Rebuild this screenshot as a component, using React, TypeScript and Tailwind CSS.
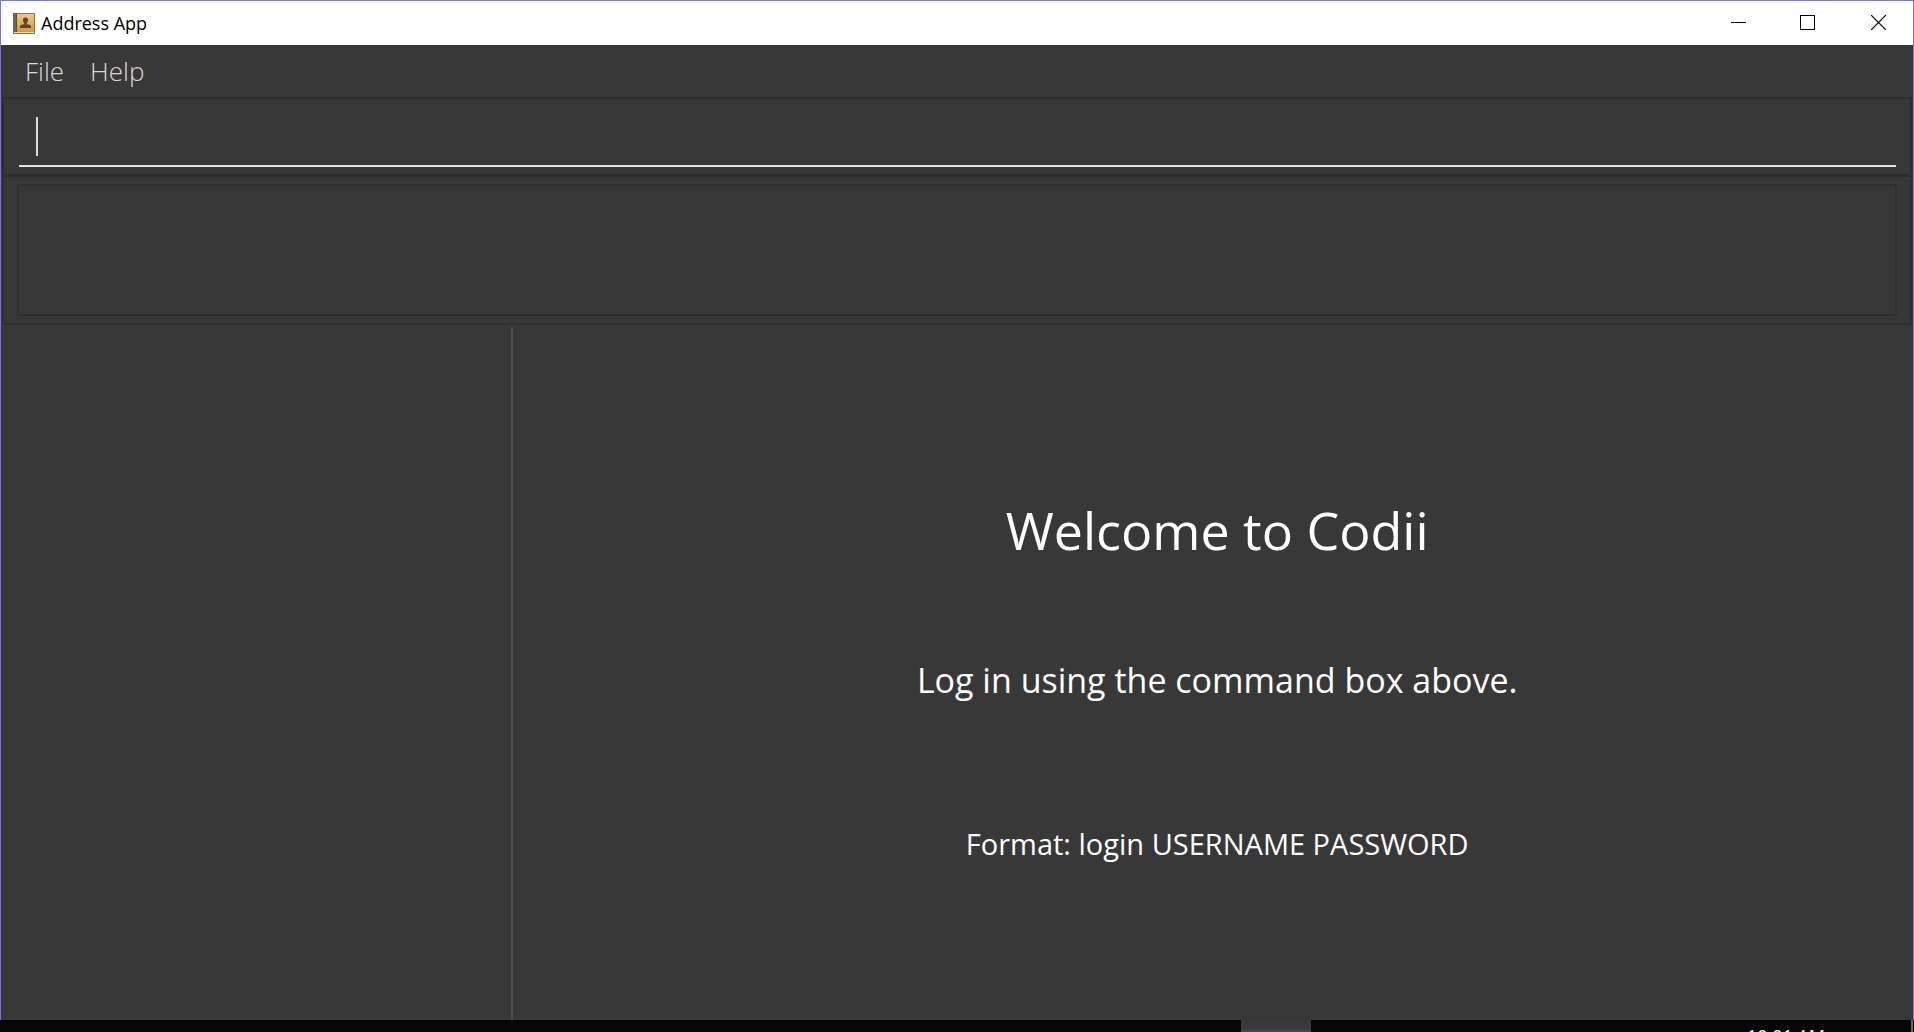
import React from 'react';

function AddressBookIcon() {
  return (
    <svg width="22" height="21" viewBox="0 0 22 21" aria-hidden="true">
      <defs>
        <linearGradient id="cover" x1="0" y1="0" x2="0" y2="1">
          <stop offset="0" stopColor="#eac98b" />
          <stop offset="1" stopColor="#cf9a41" />
        </linearGradient>
      </defs>
      <rect x="0" y="0" width="22" height="21" rx="1" fill="#8f7044" />
      <rect x="0" y="0" width="4" height="20" rx="1" fill="#776455" />
      <rect x="3" y="0" width="1" height="20" fill="#5f4a3a" />
      <rect x="4" y="1" width="17" height="18" fill="url(#cover)" />
      <rect x="1" y="19" width="20" height="1" fill="#e5dccb" />
      <path
        d="M12.500 4.500c-1.700 0-2.500 1.100-2.500 2.600 0 1.300.5 2.300 1.200 2.900v1.300c-1.700.4-3.800.7-4.200 1.400V15h11v-2.300c-.4-.7-2.500-1-4.200-1.400V10c.7-.6 1.200-1.600 1.200-2.900 0-1.500-.8-2.600-2.500-2.600z"
        fill="#5d4526"
      />
    </svg>
  );
}

function TitleBar() {
  return (
    <header className="flex h-[44px] shrink-0 items-center bg-white pl-3 text-black">
      <AddressBookIcon />
      <h1 className="ml-1.5 text-[18px] leading-6">Address App</h1>
      <div className="ml-auto flex h-full pb-0.5">
        <button type="button" aria-label="Minimize" className="flex w-[69px] items-center justify-center">
          <svg width="15" height="15" shapeRendering="crispEdges">
            <rect y="7" width="15" height="1" />
          </svg>
        </button>
        <button type="button" aria-label="Maximize" className="flex w-[69px] items-center justify-center">
          <svg width="15" height="15" shapeRendering="crispEdges">
            <rect x="0.5" y="0.5" width="14" height="14" fill="none" stroke="#000" />
          </svg>
        </button>
        <button type="button" aria-label="Close" className="ml-0.5 flex w-[69px] items-center justify-center">
          <svg width="15" height="15" stroke="#000" strokeWidth="1.2">
            <path d="M0 0L15 15M15 0L0 15" />
          </svg>
        </button>
      </div>
    </header>
  );
}

function MenuBar() {
  return (
    <nav className="flex h-[52px] shrink-0 items-center gap-[26px] pl-6 text-[26px] leading-9 font-light text-[#d8d8d8]">
      <button type="button">File</button>
      <button type="button">Help</button>
    </nav>
  );
}

function CommandBox() {
  return (
    <section className="relative mx-px h-[80px] shrink-0 border-2 border-b-3 border-[#2d2d2d] pt-3 pr-3.5 pl-[15px]">
      <input
        type="text"
        aria-label="Command"
        className="block h-[56px] w-full border-b-2 border-[#e4e4e4] bg-transparent px-4 text-[26px] text-white outline-none"
      />
      <span className="absolute top-[18px] left-8 h-[39px] w-0.5 bg-[#dcdcdc]" />
    </section>
  );
}

function ResultDisplay() {
  return (
    <section className="mx-px flex h-[148px] shrink-0 border-2 border-t-0 border-[#2f2f2f] px-[13px] pt-[7px] pb-[7px]">
      <output aria-label="Result" className="w-full border-2 border-[#2f2f2f]" />
    </section>
  );
}

function Welcome() {
  return (
    <main className="flex min-w-0 flex-[30] flex-col items-center justify-center pt-3.5 pl-2 text-center text-white">
      <h2 className="text-[52px] leading-[72px]">Welcome to Codii</h2>
      <p className="mt-[90px] text-[34px] leading-[48px]">Log in using the command box above.</p>
      <p className="mt-[116px] text-[29px] leading-[48px]">Format: login USERNAME PASSWORD</p>
    </main>
  );
}

function Taskbar() {
  return (
    <footer className="flex h-3 shrink-0 overflow-hidden bg-[#070707]">
      <div className="flex-[35]" />
      <div className="h-full w-[70px] shrink-0 border-b-2 border-[#474653] bg-[#3a3a3a]" />
      <div className="flex flex-[17] justify-end">
        <time className="mt-1 mr-[86px] text-[18px] leading-6 whitespace-nowrap text-white">10:01 AM</time>
        <div className="mr-px h-full w-0.5 bg-[#6a6a6a]" />
      </div>
    </footer>
  );
}

export default function App() {
  return (
    <div className="flex h-screen flex-col overflow-hidden bg-[#070707] font-['Open_Sans','Noto_Sans',sans-serif]">
      <div className="flex min-h-0 flex-1 flex-col border border-b-0 border-[#7877d4] bg-[#383838]">
        <TitleBar />
        <MenuBar />
        <CommandBox />
        <ResultDisplay />
        <div className="flex min-h-0 flex-1 pt-0.5">
          <aside className="flex-[11]" />
          <div role="separator" aria-orientation="vertical" className="w-0.5 bg-[#4e4e4e]" />
          <Welcome />
        </div>
      </div>
      <Taskbar />
    </div>
  );
}
